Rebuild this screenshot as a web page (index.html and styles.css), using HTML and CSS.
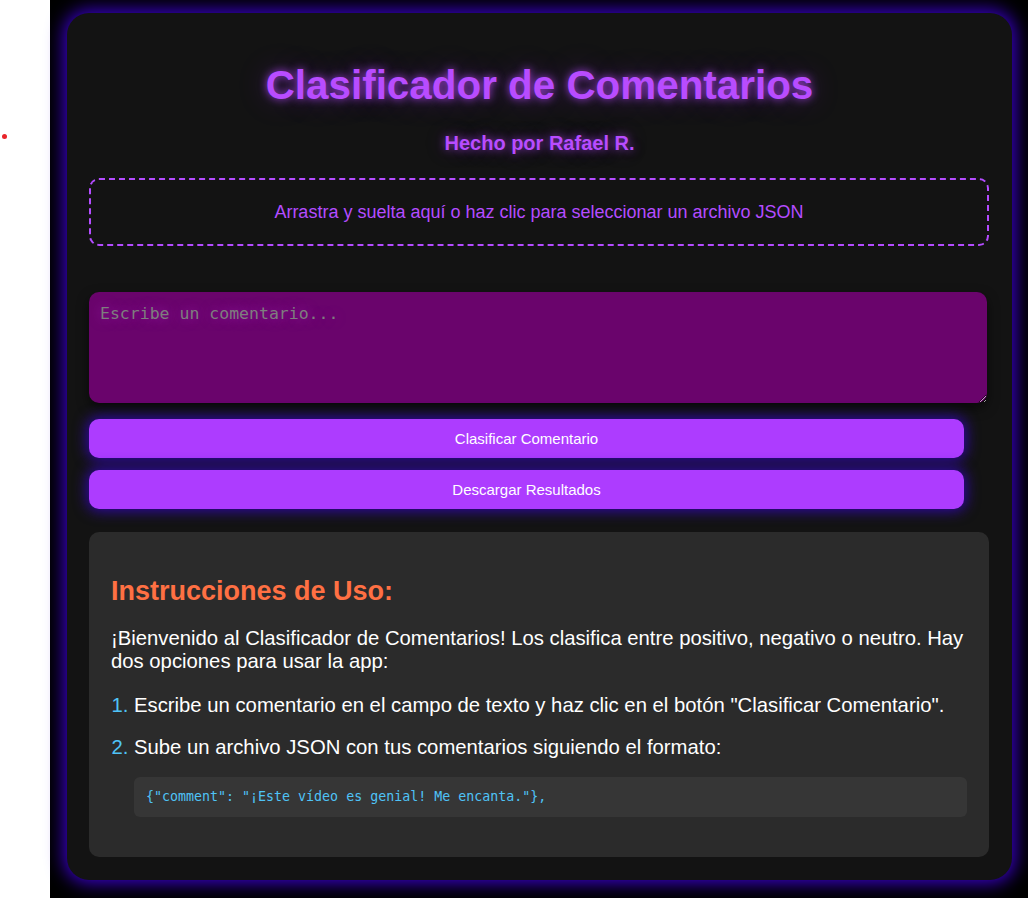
FILE: index.html
```html
<!DOCTYPE html>
<html lang="es">
<head>
<meta charset="utf-8">
<title>Clasificador de Comentarios</title>
<link rel="stylesheet" href="styles.css">
</head>
<body>
<div class="page">
  <aside class="side"><span class="dot"></span></aside>
  <main class="stage">
    <section class="card">
      <h1 class="title">Clasificador de Comentarios</h1>
      <h2 class="subtitle">Hecho por Rafael R.</h2>
      <div class="dropzone">Arrastra y suelta aquí o haz clic para seleccionar un archivo JSON</div>
      <textarea class="comment" placeholder="Escribe un comentario..."></textarea>
      <button class="btn btn-first">Clasificar Comentario</button>
      <button class="btn">Descargar Resultados</button>
      <div class="instructions">
        <h3 class="inst-title">Instrucciones de Uso:</h3>
        <p class="inst-text">¡Bienvenido al Clasificador de Comentarios! Los clasifica entre positivo, negativo o neutro. Hay dos opciones para usar la app:</p>
        <ol class="inst-list">
          <li>Escribe un comentario en el campo de texto y haz clic en el botón "Clasificar Comentario".</li>
          <li class="second">Sube un archivo JSON con tus comentarios siguiendo el formato:
            <pre class="code">{"comment": "¡Este vídeo es genial! Me encanta."},</pre>
          </li>
        </ol>
      </div>
    </section>
  </main>
</div>
</body>
</html>
```
FILE: styles.css
```css
* { box-sizing: border-box; }
html, body { margin: 0; padding: 0; }
body {
  background: #ffffff;
  font-family: "Liberation Sans", Arial, sans-serif;
}
.page {
  display: flex;
  min-height: 898px;
}
.side {
  width: 50px;
  flex: none;
  background: #ffffff;
  padding: 134px 0 0 2px;
}
.dot {
  display: block;
  width: 5px;
  height: 5px;
  border-radius: 50%;
  background: #e8242a;
}
.stage {
  flex: 1;
  background: #000000;
  padding: 13px 16px 18px 17px;
  height: 898px;
}
.card {
  width: 945px;
  height: 867px;
  background: #131313;
  border-radius: 22px;
  box-shadow: 0 0 18px 3px #3b00cf;
  padding: 22px 22px;
}
.title {
  margin: 27px 0 24px;
  text-align: center;
  font-size: 40.4px;
  line-height: 46px;
  font-weight: bold;
  color: #b84cff;
  text-shadow: 0 0 8px rgba(184, 76, 255, 0.85), 0 0 28px rgba(120, 30, 200, 0.45);
}
.subtitle {
  margin: 0 0 23px;
  text-align: center;
  font-size: 20px;
  line-height: 23px;
  font-weight: bold;
  color: #b84cff;
  text-shadow: 0 0 8px rgba(184, 76, 255, 0.7), 0 0 20px rgba(120, 30, 200, 0.35);
}
.dropzone {
  width: 900px;
  border: 2px dashed #b44cff;
  border-radius: 10px;
  padding: 21px 20px;
  text-align: center;
  font-size: 18px;
  line-height: 22px;
  color: #b44cff;
}
.comment {
  display: block;
  width: 898px;
  height: 111px;
  margin-top: 46px;
  padding: 12px 11px;
  border: none;
  border-radius: 10px;
  background: #6a046c;
  color: #ffffff;
  font-family: "DejaVu Sans Mono", monospace;
  font-size: 16.5px;
  line-height: 20px;
  box-shadow: 0 5px 12px rgba(0, 0, 0, 0.55);
  outline: none;
}
.comment::placeholder {
  color: #7e7e7e;
  text-shadow: 0 0 12px rgba(170, 40, 200, 0.7);
}
.btn {
  display: block;
  width: 875px;
  height: 39px;
  margin-top: 12px;
  border: none;
  border-radius: 10px;
  background: #ad3cff;
  color: #ffffff;
  font-family: "Liberation Sans", Arial, sans-serif;
  font-size: 15px;
  box-shadow: 0 0 14px 2px #3008a8;
}
.btn-first { margin-top: 16px; }
.instructions {
  margin-top: 23px;
  width: 900px;
  background: #2b2b2b;
  border-radius: 10px;
  padding: 20px 22px 20px 22px;
}
.inst-title {
  margin: 24px 0 0;
  font-size: 27px;
  line-height: 31px;
  font-weight: bold;
  color: #ff7043;
}
.inst-text {
  margin: 20px 0 0;
  font-size: 20.3px;
  line-height: 23px;
  color: #ffffff;
}
.inst-list {
  margin: 21px 0 20px;
  padding-left: 23px;
  font-size: 20.3px;
  line-height: 23px;
  color: #ffffff;
}
.inst-list li::marker { color: #4fc3f7; }
.inst-list .second { margin-top: 19px; }
.code {
  margin: 18px 0 0;
  background: #363636;
  border-radius: 6px;
  padding: 12px 12px;
  font-family: "DejaVu Sans Mono", monospace;
  font-size: 13.3px;
  line-height: 16px;
  color: #4fc3f7;
}
```
